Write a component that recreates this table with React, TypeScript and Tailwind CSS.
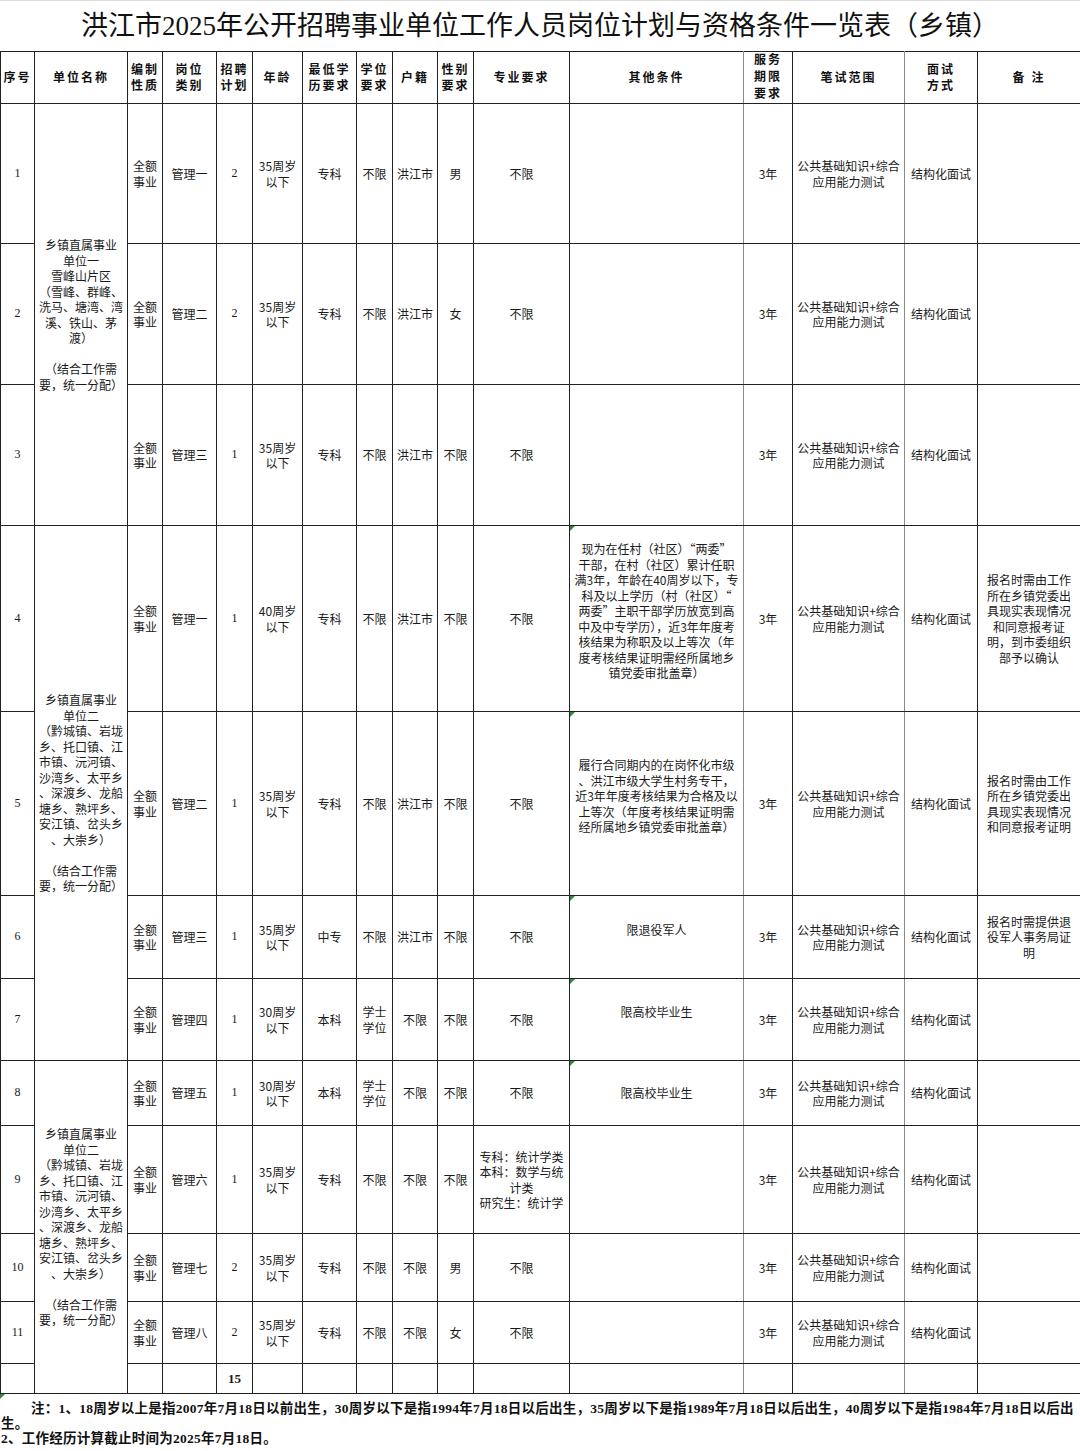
import React from "react";

const serifCjk = "font-['Liberation_Serif','Noto_Sans_CJK_SC',serif]";
const sansCjk = "font-['Noto_Sans_CJK_SC','Noto_Sans',sans-serif]";

type Row = {
  no: string;
  post: string;
  plan: string;
  age: string;
  edu: string;
  degree: string;
  hukou: string;
  sex: string;
  major: string;
  other: string;
  otherLift?: boolean;
  flag?: boolean;
  note: string;
  h: string;
};

const UNIT_ONE = "乡镇直属事业\n单位一\n雪峰山片区\n（雪峰、群峰、\n洗马、塘湾、湾\n溪、铁山、茅\n渡）\n\n（结合工作需\n要，统一分配）";
const UNIT_TWO = "乡镇直属事业\n单位二\n（黔城镇、岩垅\n乡、托口镇、江\n市镇、沅河镇、\n沙湾乡、太平乡\n、深渡乡、龙船\n塘乡、熟坪乡、\n安江镇、岔头乡\n、大崇乡）\n\n（结合工作需\n要，统一分配）";

const rows: Row[] = [
  { no: "1", post: "管理一", plan: "2", age: "35周岁\n以下", edu: "专科", degree: "不限", hukou: "洪江市", sex: "男", major: "不限", other: "", note: "", h: "h-[140px]" },
  { no: "2", post: "管理二", plan: "2", age: "35周岁\n以下", edu: "专科", degree: "不限", hukou: "洪江市", sex: "女", major: "不限", other: "", note: "", h: "h-[141px]" },
  { no: "3", post: "管理三", plan: "1", age: "35周岁\n以下", edu: "专科", degree: "不限", hukou: "洪江市", sex: "不限", major: "不限", other: "", note: "", h: "h-[141px]" },
  {
    no: "4", post: "管理一", plan: "1", age: "40周岁\n以下", edu: "专科", degree: "不限", hukou: "洪江市", sex: "不限", major: "不限",
    other: "现为在任村（社区）“两委”\n干部，在村（社区）累计任职\n满3年，年龄在40周岁以下，专\n科及以上学历（村（社区）“\n两委”主职干部学历放宽到高\n中及中专学历），近3年年度考\n核结果为称职及以上等次（年\n度考核结果证明需经所属地乡\n镇党委审批盖章）",
    otherLift: true, flag: true,
    note: "报名时需由工作\n所在乡镇党委出\n具现实表现情况\n和同意报考证\n明，到市委组织\n部予以确认", h: "h-[186px]",
  },
  {
    no: "5", post: "管理二", plan: "1", age: "35周岁\n以下", edu: "专科", degree: "不限", hukou: "洪江市", sex: "不限", major: "不限",
    other: "履行合同期内的在岗怀化市级\n、洪江市级大学生村务专干，\n近3年年度考核结果为合格及以\n上等次（年度考核结果证明需\n经所属地乡镇党委审批盖章）",
    otherLift: true, flag: true,
    note: "报名时需由工作\n所在乡镇党委出\n具现实表现情况\n和同意报考证明", h: "h-[184px]",
  },
  { no: "6", post: "管理三", plan: "1", age: "35周岁\n以下", edu: "中专", degree: "不限", hukou: "洪江市", sex: "不限", major: "不限", other: "限退役军人", otherLift: true, flag: true, note: "报名时需提供退\n役军人事务局证\n明", h: "h-[83px]" },
  { no: "7", post: "管理四", plan: "1", age: "30周岁\n以下", edu: "本科", degree: "学士\n学位", hukou: "不限", sex: "不限", major: "不限", other: "限高校毕业生", otherLift: true, flag: true, note: "", h: "h-[82px]" },
  { no: "8", post: "管理五", plan: "1", age: "30周岁\n以下", edu: "本科", degree: "学士\n学位", hukou: "不限", sex: "不限", major: "不限", other: "限高校毕业生", flag: true, note: "", h: "h-[65px]" },
  { no: "9", post: "管理六", plan: "1", age: "35周岁\n以下", edu: "专科", degree: "不限", hukou: "不限", sex: "不限", major: "专科：统计学类\n本科：数学与统\n计类\n研究生：统计学", other: "", note: "", h: "h-[108px]" },
  { no: "10", post: "管理七", plan: "2", age: "35周岁\n以下", edu: "专科", degree: "不限", hukou: "不限", sex: "男", major: "不限", other: "", note: "", h: "h-[68px]" },
  { no: "11", post: "管理八", plan: "2", age: "35周岁\n以下", edu: "专科", degree: "不限", hukou: "不限", sex: "女", major: "不限", other: "", note: "", h: "h-[62px]" },
];

const widths = [
  "w-[34px]", "w-[93px]", "w-[35px]", "w-[54px]", "w-[36px]", "w-[50px]", "w-[54px]", "w-[36px]",
  "w-[45px]", "w-[36px]", "w-[96px]", "w-[174px]", "w-[49px]", "w-[112px]", "w-[73px]", "w-[103px]",
];

const headers = [
  "序号", "单位名称", "编制\n性质", "岗位\n类别", "招聘\n计划", "年龄", "最低学\n历要求", "学位\n要求",
  "户籍", "性别\n要求", "专业要求", "其他条件", "服务\n期限\n要求", "笔试范围", "面试\n方式", "备 注",
];

function Lines({ t }: { t: string }) {
  return (
    <>
      {t.split("\n").map((s, i) => (
        <div key={i} className="whitespace-nowrap">
          {s || "\u00a0"}
        </div>
      ))}
    </>
  );
}

const td = "border border-[#222] p-0 text-center align-middle";
const grayR = "border-r-[#8a8a8a]";
const grayL = "border-l-[#8a8a8a]";

function Flag() {
  return (
    <span className="absolute left-0 top-0 h-0 w-0 border-r-[5px] border-t-[5px] border-r-transparent border-t-[#2e8b2e]" />
  );
}

export default function App() {
  return (
    <div className="w-[1080px] bg-white text-[#1a1a1a]">
      <div className={`flex h-[51px] items-center justify-center border-t border-[#dcdcdc] text-[27px] text-[#111] ${serifCjk}`}>
        洪江市2025年公开招聘事业单位工作人员岗位计划与资格条件一览表（乡镇）
      </div>

      <table className="w-[1080px] table-fixed border-collapse">
        <colgroup>
          {widths.map((w, i) => (
            <col key={i} className={w} />
          ))}
        </colgroup>
        <thead>
          <tr className="h-[52px]">
            {headers.map((h, i) => (
              <th
                key={i}
                className={`${td} ${i === 11 ? grayR : ""} ${i === 12 ? grayL : ""} ${i === 13 ? grayR : ""} ${i === 14 ? grayL : ""} text-[12px] font-bold tracking-[2px] text-[#111] ${i === 12 ? "leading-[17px]" : "leading-[16px]"} ${serifCjk}`}
              >
                <Lines t={h} />
              </th>
            ))}
          </tr>
        </thead>
        <tbody className={`text-[12px] leading-[15.5px] ${sansCjk}`}>
          {rows.map((r, idx) => (
            <tr key={r.no} className={r.h}>
              <td className={`${td} font-['Liberation_Serif',serif]`}>{r.no}</td>
              {idx === 0 && (
                <td rowSpan={3} className={td}>
                  <Lines t={UNIT_ONE} />
                </td>
              )}
              {idx === 3 && (
                <td rowSpan={4} className={td}>
                  <Lines t={UNIT_TWO} />
                </td>
              )}
              {idx === 7 && (
                <td rowSpan={5} className={td}>
                  <Lines t={UNIT_TWO} />
                </td>
              )}
              <td className={td}>
                <Lines t={"全额\n事业"} />
              </td>
              <td className={td}>{r.post}</td>
              <td className={`${td} font-['Liberation_Serif',serif]`}>{r.plan}</td>
              <td className={td}>
                <Lines t={r.age} />
              </td>
              <td className={td}>{r.edu}</td>
              <td className={td}>
                <Lines t={r.degree} />
              </td>
              <td className={td}>{r.hukou}</td>
              <td className={td}>{r.sex}</td>
              <td className={td}>
                <Lines t={r.major} />
              </td>
              <td className={`${td} ${grayR} relative`}>
                {r.flag && <Flag />}
                <div className={r.otherLift ? "pb-[15px]" : ""}>
                  <Lines t={r.other} />
                </div>
              </td>
              <td className={`${td} ${grayL}`}>3年</td>
              <td className={`${td} ${grayR}`}>
                <Lines t={"公共基础知识+综合\n应用能力测试"} />
              </td>
              <td className={`${td} ${grayL}`}>结构化面试</td>
              <td className={td}>
                <Lines t={r.note} />
              </td>
            </tr>
          ))}
          <tr className="h-[30px]">
            <td className={td}></td>
            <td className={td}></td>
            <td className={td}></td>
            <td className={`${td} font-['Liberation_Serif',serif] text-[13px] font-bold`}>15</td>
            <td className={td}></td>
            <td className={td}></td>
            <td className={td}></td>
            <td className={td}></td>
            <td className={td}></td>
            <td className={td}></td>
            <td className={`${td} ${grayR}`}></td>
            <td className={`${td} ${grayL}`}></td>
            <td className={`${td} ${grayR}`}></td>
            <td className={`${td} ${grayL}`}></td>
            <td className={td}></td>
          </tr>
        </tbody>
      </table>

      <div className={`relative h-[58px] border-b border-[#dcdcdc] pt-[7px] text-[13.5px] font-bold leading-[15px] tracking-[0.25px] text-[#111] ${serifCjk}`}>
        <span className="absolute left-0 top-0 h-0 w-0 border-r-[5px] border-t-[5px] border-r-transparent border-t-[#2e8b2e]" />
        <div className="overflow-hidden whitespace-nowrap pl-[31px]">
          注：1、18周岁以上是指2007年7月18日以前出生，30周岁以下是指1994年7月18日以后出生，35周岁以下是指1989年7月18日以后出生，40周岁以下是指1984年7月18日以后出
        </div>
        <div className="pl-[1px]">生。</div>
        <div className="pl-[1px]">2、工作经历计算截止时间为2025年7月18日。</div>
      </div>
    </div>
  );
}
